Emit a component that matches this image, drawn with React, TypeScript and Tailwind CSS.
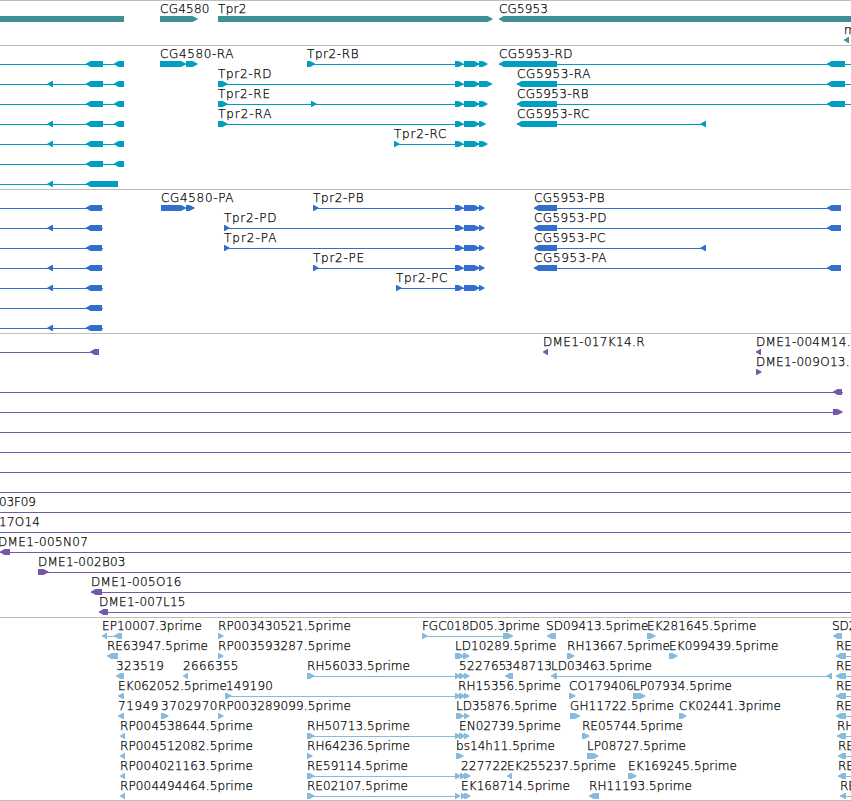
type Block = [dir: "L" | "R" | "B", from: number, to: number];
type Label = [text: string, from: number, to?: number];
type Row = { lines?: [number, number][]; blocks?: Block[]; labels?: Label[] };
type TrackData = { name: string; color: string; height: number; pitch: number; rows: Row[] };

const L = (a: number, b: number): Block => ["L", a, b];
const R = (a: number, b: number): Block => ["R", a, b];

const rnaLeft: Block[] = [L(86, 103), L(114, 124)];
const intron = L(47.5, 53);
const tail = (end: number): Block[] => [R(455, 463.5), R(464, 479.5), R(479, end)];
const triple: Block[] = [R(455, 460.5), R(459, 465.5), R(464, 469.5)];

const genes: Row[] = [
  {
    blocks: [["B", 0, 124], R(160, 197.5), R(218, 492.5), L(499, 860)],
    labels: [["CG4580", 160, 209], ["Tpr2", 218, 246], ["CG5953", 499, 547.5]],
  },
  { blocks: [L(844, 849)], labels: [["m", 844]] },
];

const transcripts: Row[] = [
  {
    lines: [[0, 124], [307, 487], [499, 851]],
    blocks: [...rnaLeft, R(160, 186), R(186, 197.5), R(307, 315), ...tail(487.5), L(499, 557), L(827, 845)],
    labels: [["CG4580-RA", 160, 233], ["Tpr2-RB", 307, 358], ["CG5953-RD", 499, 572]],
  },
  {
    lines: [[0, 124], [218, 490], [517, 851]],
    blocks: [intron, ...rnaLeft, R(218, 227.5), ...tail(492), L(517, 557), L(827, 845)],
    labels: [["Tpr2-RD", 218, 271], ["CG5953-RA", 517, 590]],
  },
  {
    lines: [[0, 124], [218, 487], [517, 851]],
    blocks: [...rnaLeft, R(218, 227.5), R(311, 316.5), ...tail(487.5), L(517, 557), L(827, 845)],
    labels: [["Tpr2-RE", 218, 269.5], ["CG5953-RB", 517, 588]],
  },
  {
    lines: [[0, 124], [218, 485], [517, 706]],
    blocks: [intron, ...rnaLeft, R(218, 227.5), ...tail(485.5), L(517, 557), L(700.5, 706)],
    labels: [["Tpr2-RA", 218, 271], ["CG5953-RC", 517, 589]],
  },
  {
    lines: [[0, 124], [394, 487]],
    blocks: [intron, ...rnaLeft, R(394, 399.5), ...tail(487.5)],
    labels: [["Tpr2-RC", 394, 446]],
  },
  { lines: [[0, 124]], blocks: rnaLeft },
  { lines: [[0, 118]], blocks: [intron, L(86, 118)] },
];

const cds = L(86, 102);
const proteins: Row[] = [
  {
    lines: [[0, 103], [313, 484], [534, 841]],
    blocks: [cds, R(161, 186), R(186, 194.5), R(313, 318.5), ...tail(484.5), L(534, 557), L(827, 841)],
    labels: [["CG4580-PA", 161, 233], ["Tpr2-PB", 313, 363], ["CG5953-PB", 534, 604]],
  },
  {
    lines: [[0, 103], [224, 484], [534, 841]],
    blocks: [intron, cds, R(224, 229.5), ...tail(484.5), L(534, 557), L(827, 841)],
    labels: [["Tpr2-PD", 224, 276], ["CG5953-PD", 534, 606]],
  },
  {
    lines: [[0, 103], [224, 484], [534, 706]],
    blocks: [cds, R(224, 229.5), ...tail(484.5), L(534, 557), L(700.5, 706)],
    labels: [["Tpr2-PA", 224, 276], ["CG5953-PC", 534, 605]],
  },
  {
    lines: [[0, 103], [313, 484], [534, 841]],
    blocks: [intron, cds, R(313, 318.5), ...tail(484.5), L(534, 557), L(827, 841)],
    labels: [["Tpr2-PE", 313, 363.5], ["CG5953-PA", 534, 606]],
  },
  {
    lines: [[0, 103], [396, 484]],
    blocks: [intron, cds, R(396, 401.5), ...tail(484.5)],
    labels: [["Tpr2-PC", 396, 447]],
  },
  { lines: [[0, 103]], blocks: [cds] },
  { lines: [[0, 103]], blocks: [intron, cds] },
];

const full: Row = { lines: [[0, 851]] };
const clones: Row[] = [
  {
    lines: [[0, 98]],
    blocks: [L(90, 99), L(543, 548), L(756, 761)],
    labels: [["DME1-017K14.R", 543, 644], ["DME1-004M14.", 756, 850]],
  },
  { blocks: [R(756, 761.5)], labels: [["DME1-009O13.", 756, 849]] },
  { lines: [[0, 843]], blocks: [L(833, 842)] },
  { lines: [[0, 842]], blocks: [R(833, 842.5)] },
  full,
  full,
  full,
  full,
  { ...full, labels: [["03F09", -1, 35.5]] },
  { ...full, labels: [["17O14", -1, 39.5]] },
  { ...full, blocks: [L(0, 10)], labels: [["DME1-005N07", -2, 87.5]] },
  { lines: [[38, 851]], blocks: [R(38, 48.5)], labels: [["DME1-002B03", 38, 125]] },
  { lines: [[91, 851]], blocks: [L(91, 102)], labels: [["DME1-005O16", 91, 181]] },
  { lines: [[99, 851]], blocks: [L(99, 108)], labels: [["DME1-007L15", 99, 185]] },
];

const ests: Row[] = [
  {
    lines: [[102, 122], [422, 512]],
    blocks: [L(102, 107), L(114, 122), R(218, 223.5), R(422, 427.5), R(503, 513), L(547, 556), R(647, 655.5), L(833, 842)],
    labels: [
      ["EP10007.3prime", 102, 201.5],
      ["RP003430521.5prime", 218, 350.5],
      ["FGC018D05.3prime", 422, 539.5],
      ["SD09413.5prime", 546, 648],
      ["EK281645.5prime", 647, 756],
      ["SD2", 832],
    ],
  },
  {
    lines: [[836, 851]],
    blocks: [L(107, 118), R(218, 223.5), R(455, 464), R(463, 469.5), R(567, 574.5), R(669, 677.5), L(836, 846)],
    labels: [
      ["RE63947.5prime", 107, 207.5],
      ["RP003593287.5prime", 218, 350.5],
      ["LD10289.5prime", 455, 556],
      ["RH13667.5prime", 567, 669.5],
      ["EK099439.5prime", 669, 778],
      ["RE", 836],
    ],
  },
  {
    lines: [[307, 469], [551, 832], [836, 851]],
    blocks: [L(116, 124), L(183, 188), R(307, 314.5), ...triple, L(505, 513), L(551, 557), L(826.5, 832), L(836, 846)],
    labels: [
      ["323519", 116, 163.5],
      ["2666355", 183, 238],
      ["RH56033.5prime", 307, 409.5],
      ["522765", 459, 506],
      ["348713", 505, 551.5],
      ["LD03463.5prime", 551, 651.5],
      ["RE", 836],
    ],
  },
  {
    lines: [[225, 469], [836, 851]],
    blocks: [L(118, 124), R(225, 231.5), ...triple, R(569, 575.5), R(633, 645.5), L(836, 846)],
    labels: [
      ["EK062052.5prime", 118, 226.5],
      ["149190", 226, 272.5],
      ["RH15356.5prime", 458, 560.5],
      ["CO179406", 569, 633.5],
      ["LP07934.5prime", 633, 731.5],
      ["RE", 836],
    ],
  },
  {
    lines: [[836, 851]],
    blocks: [L(118, 124), R(161, 168.5), R(218, 223.5), R(456, 464), R(464, 469.5), R(570, 580), R(679, 686.5), L(836, 846)],
    labels: [
      ["71949", 118, 158],
      ["3702970", 161, 217],
      ["RP003289099.5prime", 218, 350.5],
      ["LD35876.5prime", 456, 556.5],
      ["GH11722.5prime", 570, 673.5],
      ["CK02441.3prime", 679, 780.5],
      ["RE", 836],
    ],
  },
  {
    lines: [[307, 469], [837, 851]],
    blocks: [L(120, 125), R(307, 314.5), ...triple, R(582, 589.5), L(837, 846)],
    labels: [
      ["RP004538644.5prime", 120, 252.5],
      ["RH50713.5prime", 307, 409.5],
      ["EN02739.5prime", 459, 560.5],
      ["RE05744.5prime", 582, 682.5],
      ["RH", 837],
    ],
  },
  {
    lines: [[838, 851]],
    blocks: [L(120, 125), R(307, 312.5), R(456, 463.5), R(587, 598.5), L(838, 846)],
    labels: [
      ["RP004512082.5prime", 120, 252.5],
      ["RH64236.5prime", 307, 409.5],
      ["bs14h11.5prime", 456, 554.5],
      ["LP08727.5prime", 587, 685.5],
      ["RE", 838],
    ],
  },
  {
    lines: [[307, 469], [838, 851]],
    blocks: [L(120, 125), R(307, 314.5), R(455, 461), R(460, 466), R(464, 470.5), L(507, 512), R(628, 636.5), L(838, 846)],
    labels: [
      ["RP004021163.5prime", 120, 252.5],
      ["RE59114.5prime", 307, 407.5],
      ["227722", 461, 507.5],
      ["EK255237.5prime", 507, 615.5],
      ["EK169245.5prime", 628, 736.5],
      ["RE", 838],
    ],
  },
  {
    lines: [[307, 459], [461, 469], [840, 851]],
    blocks: [L(120, 125), R(307, 314.5), R(455, 460.5), R(461, 466.5), R(464, 470.5), L(589, 599), L(840, 846)],
    labels: [
      ["RP004494464.5prime", 120, 252.5],
      ["RE02107.5prime", 307, 407.5],
      ["EK168714.5prime", 461, 569.5],
      ["RH11193.5prime", 589, 691.5],
      ["RE", 840],
    ],
  },
];

const tracks: TrackData[] = [
  { name: "genes", color: "#3f8f97", height: 45, pitch: 21, rows: genes },
  { name: "transcripts", color: "#009ec1", height: 144, pitch: 20, rows: transcripts },
  { name: "proteins", color: "#316fce", height: 144, pitch: 20, rows: proteins },
  { name: "clones", color: "#7559a9", height: 284, pitch: 20, rows: clones },
  { name: "ests", color: "#86bbdd", height: 183, pitch: 20, rows: ests },
];

function blockPoints([dir, a, b]: Block) {
  if (dir === "B") return `${a},16 ${b},16 ${b},22 ${a},22`;
  if (dir === "R") {
    const n = Math.max(a + 0.8, b - 5);
    return `${a},16 ${n},16 ${b - 1.5},17.7 ${b},18.4 ${b},19.4 ${b - 2},20.6 ${n},22 ${a},22`;
  }
  const n = Math.min(b - 0.8, a + 4.5);
  return `${b},16 ${n},16 ${a + 1.5},17.7 ${a},18.4 ${a},19.4 ${a + 2},20.6 ${n},22 ${b},22`;
}

function Track({ track }: { track: TrackData }) {
  return (
    <section className="w-full shrink-0 overflow-hidden border-t border-[#bdbdbd]" style={{ height: track.height }}>
      <svg className="-mt-px block w-[851px]" width={851} height={track.height}>
        {track.rows.map((row, i) => (
          <g key={i} transform={`translate(0 ${i * track.pitch})`} fill={track.color}>
            {row.lines?.map(([a, b], k) => (
              <rect key={k} x={a} y={19} width={b - a} height={1} />
            ))}
            {row.blocks?.map((b, k) => (
              <polygon key={k} points={blockPoints(b)} />
            ))}
            {row.labels?.map(([text, a, b]) => (
              <text key={text + a} x={a} y={13} fill="#000" stroke="#000" strokeWidth={0.25} textLength={b === undefined ? undefined : b - a + 0.5}>
                {text}
              </text>
            ))}
          </g>
        ))}
      </svg>
    </section>
  );
}

export default function App() {
  return (
    <main className="flex h-[801px] w-[851px] flex-col overflow-hidden bg-white font-['DejaVu_Sans',sans-serif] text-[12px] font-extralight">
      {tracks.map((t) => (
        <Track key={t.name} track={t} />
      ))}
      <div className="h-px w-full bg-[#bdbdbd]" />
    </main>
  );
}
